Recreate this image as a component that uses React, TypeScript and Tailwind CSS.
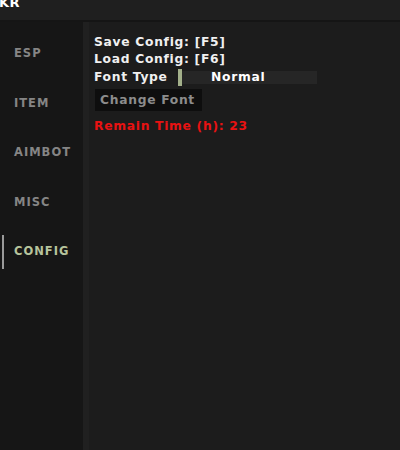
import React from "react";

const tabs = ["ESP", "ITEM", "AIMBOT", "MISC", "CONFIG"];

export default function App() {
	const active = "CONFIG";
	return (
		<div
			className="flex h-[450px] w-[400px] flex-col overflow-hidden bg-[#1c1c1c]"
			style={{ fontFamily: '"DejaVu Sans", sans-serif' }}
		>
			<div className="relative h-[22px] shrink-0 border-[#151515] border-b-2 bg-[#1f1f1f]">
				<span className="absolute top-[-7px] left-[-1px] font-bold text-[13px] text-white tracking-wide">
					KR
				</span>
			</div>
			<div className="flex flex-1">
				<nav className="w-[83px] shrink-0 bg-[#161616] pt-[7px]">
					{tabs.map((t) => (
						<div key={t} className="relative flex h-[49.5px] items-center pl-[14px]">
							{t === active && (
								<div className="absolute top-[8px] left-[2px] h-[34px] w-[2px] bg-[#9a9a9a]" />
							)}
							<span
								className={`font-bold text-[11.5px] tracking-[1px] ${
									t === active ? "text-[#b7c49c]" : "text-[#858585]"
								}`}
							>
								{t}
							</span>
						</div>
					))}
				</nav>
				<div className="w-[6px] shrink-0 bg-[#202020]" />
				<main className="flex-1 pt-[12px] pl-[5px] font-bold text-[12.3px] text-[#f0f0f0] tracking-[0.7px]">
					<div className="h-[17px] leading-[17px]">Save Config: [F5]</div>
					<div className="h-[17px] leading-[17px]">Load Config: [F6]</div>
					<div className="flex h-[19px] items-center">
						<span className="w-[84px]">Font Type</span>
						<div className="h-[17px] w-[4px] bg-[#a3b08a]" />
						<div className="flex h-[13px] w-[135px] items-center bg-[#262626] pl-[29px] text-white">
							Normal
						</div>
					</div>
					<div className="mt-[2px] ml-[1px] flex h-[22px] w-[107px] items-center bg-[#0e0e0e] pl-[5px] text-[#8c8c8c]">
						Change Font
					</div>
					<div className="mt-[7px] h-[17px] text-[#e81212] leading-[17px]">
						Remain Time (h): 23
					</div>
				</main>
			</div>
		</div>
	);
}
